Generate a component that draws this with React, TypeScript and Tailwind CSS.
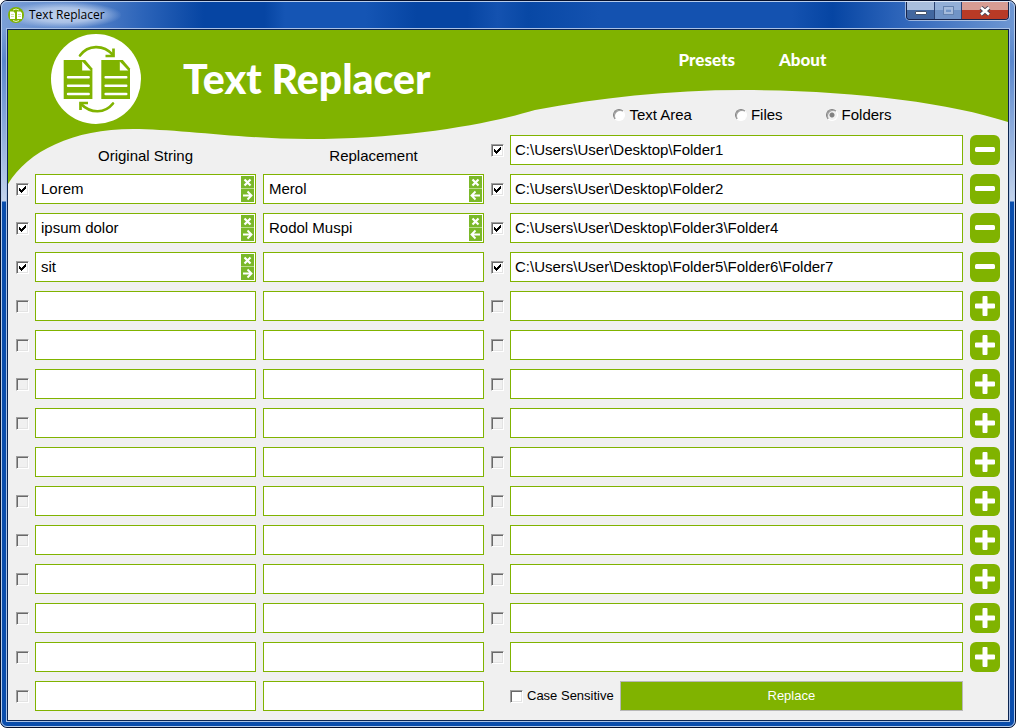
import { useState } from 'react'

type Kind = 'Text Area' | 'Files' | 'Folders'

interface Pair {
  original: string
  replacement: string
  active: boolean
}

interface Folder {
  path: string
  active: boolean
}

const initialPairs: Pair[] = Array.from({ length: 14 }, (_, i) => ({
  original: ['Lorem', 'ipsum dolor', 'sit'][i] ?? '',
  replacement: ['Merol', 'Rodol Muspi'][i] ?? '',
  active: i < 3,
}))

const initialFolders: Folder[] = Array.from({ length: 14 }, (_, i) => ({
  path:
    [
      'C:\\Users\\User\\Desktop\\Folder1',
      'C:\\Users\\User\\Desktop\\Folder2',
      'C:\\Users\\User\\Desktop\\Folder3\\Folder4',
      'C:\\Users\\User\\Desktop\\Folder5\\Folder6\\Folder7',
    ][i] ?? '',
  active: i < 4,
}))

function Logo({ className }: { className: string }) {
  return (
    <svg viewBox="0 0 90 90" className={className} aria-hidden="true">
      <circle cx="45" cy="45" r="45" fill="#fff" />
      <g fill="none" stroke="#80b300" strokeWidth="2.700">
        <path d="M29 21.500C37 11 52 10 62 21" strokeLinecap="round" />
        <path d="M62.500 14.500V22H54.500" />
        <path d="M62 69.500C54 79.500 40 80 30 70" strokeLinecap="round" />
        <path d="M29.500 76V69H37" />
      </g>
      {[12.7, 50.3].map((x) => (
        <g key={x} transform={`translate(${x} 26)`}>
          <path d="M0 0H21.500L28.700 8.500V39H0Z" fill="#80b300" />
          <path d="M18.500 1.500V10.500H27Z" fill="#fff" />
          <path
            d="M4.300 17.300H25M4.300 25.700H25M4.300 34H25"
            stroke="#fff"
            strokeWidth="2.400"
            strokeLinecap="round"
          />
        </g>
      ))}
    </svg>
  )
}

function Check({
  label,
  checked,
  disabled,
  onChange,
}: {
  label: string
  checked: boolean
  disabled?: boolean
  onChange: () => void
}) {
  return (
    <span className="relative block size-[13px] shrink-0">
      <input
        type="checkbox"
        aria-label={label}
        checked={checked}
        disabled={disabled}
        onChange={onChange}
        className="peer block size-[13px] appearance-none border border-t-[#a0a0a0] border-l-[#a0a0a0] border-r-white border-b-white bg-white shadow-[inset_1px_1px_0_#696969,inset_-1px_-1px_0_#e3e3e3] disabled:bg-[#f0f0f0]"
      />
      <svg
        viewBox="0 0 13 13"
        className="pointer-events-none absolute inset-0 hidden size-[13px] peer-checked:block"
        shapeRendering="crispEdges"
      >
        <path d="M3 5V8L5 10L10 5V2L5 7Z" fill="#000" />
      </svg>
    </span>
  )
}

function Field({
  label,
  value,
  arrow,
  onChange,
  onCopy,
}: {
  label: string
  value: string
  arrow: 'left' | 'right'
  onChange: (value: string) => void
  onCopy: () => void
}) {
  return (
    <div className="flex h-[30px] min-w-0 flex-1 items-center border border-[#80b300] bg-white pr-px">
      <input
        type="text"
        aria-label={label}
        value={value}
        onChange={(e) => onChange(e.target.value)}
        className="h-full min-w-0 flex-1 bg-transparent px-[5px] pb-0.5 text-[15px] outline-none"
      />
      {value !== '' && (
        <div className="flex flex-col">
          <button
            type="button"
            aria-label={`Clear ${label}`}
            onClick={() => onChange('')}
            className="size-[13px] border-b border-[#b9dc8a] bg-[#7ab829]"
          >
            <svg viewBox="0 0 13 12" className="block h-3 w-[13px]">
              <path d="M3.500 3.500L9.500 9.500M9.500 3.500L3.500 9.500" stroke="#fff" strokeWidth="2.200" />
            </svg>
          </button>
          <button
            type="button"
            aria-label={`Copy ${label}`}
            onClick={onCopy}
            className="size-[13px] bg-[#7ab829]"
          >
            <svg viewBox="0 0 13 13" className="block size-[13px]" fill="none" stroke="#fff" strokeWidth="1.900">
              {arrow === 'right' ? (
                <path d="M2 6.500H10.500M6.500 2.500L10.500 6.500L6.500 10.500" />
              ) : (
                <path d="M11 6.500H2.500M6.500 2.500L2.500 6.500L6.500 10.500" />
              )}
            </svg>
          </button>
        </div>
      )}
    </div>
  )
}

function TitleBar() {
  return (
    <div className="flex h-[26px] items-start justify-between">
      <div className="flex h-[26px] items-center gap-[5px] bg-[radial-gradient(ellipse_at_center,#c3d4ee_0%,#b4c9eae0_40%,transparent_72%)] pr-4 pl-[2px]">
        <svg viewBox="0 0 16 16" className="size-4" aria-hidden="true">
          <circle cx="8" cy="8" r="8" fill="#80b300" />
          <path d="M2 4.500H5.500L7 6V12H2ZM9 4.500H12.500L14 6V12H9Z" fill="#fff" />
          <path d="M5 3Q8 1 11 3M5 13.500Q8 15.500 11 13.500" stroke="#e6f0c8" fill="none" />
          <path d="M3 7.500H6M3 9.500H6M10 7.500H13M10 9.500H13" stroke="#c5de88" strokeWidth="0.800" />
        </svg>
        <span className="font-['Open_Sans','Noto_Sans',sans-serif] text-[12px] leading-4">Text Replacer</span>
      </div>
      <div className="mr-px flex h-[18px] overflow-hidden rounded-b-[4px] border border-t-0 border-[#16244a] shadow-[0_0_0_1px_#ffffff80]">
        <button
          type="button"
          aria-label="Minimize"
          className="flex w-[28px] items-center justify-center border-r border-[#2a4170] bg-linear-to-b from-[#a9bedd] from-45% to-[#42679f] to-50% pt-1"
        >
          <span className="block h-1 w-3 rounded-[1px] border border-[#46536b] bg-white" />
        </button>
        <button
          type="button"
          aria-label="Maximize"
          className="flex w-[27px] items-center justify-center border-r border-[#2a4170] bg-linear-to-b from-[#93afd7] from-45% to-[#7194c6] to-50%"
        >
          <span className="block h-[7px] w-[9px] border-2 border-[#a5bbdb] outline outline-[#6482ae]" />
        </button>
        <button
          type="button"
          aria-label="Close"
          className="flex w-[46px] items-center justify-center bg-linear-to-b from-[#d79c93] from-45% to-[#b83a26] to-50%"
        >
          <svg viewBox="0 0 12 10" className="h-[10px] w-3">
            <path d="M2 1.500L10 8.500M10 1.500L2 8.500" stroke="#4a4656" strokeWidth="4.400" />
            <path d="M2 1.500L10 8.500M10 1.500L2 8.500" stroke="#fff" strokeWidth="2.500" />
          </svg>
        </button>
      </div>
    </div>
  )
}

export default function App() {
  const [pairs, setPairs] = useState(initialPairs)
  const [folders, setFolders] = useState(initialFolders)
  const [kind, setKind] = useState<Kind>('Folders')
  const [caseSensitive, setCaseSensitive] = useState(false)

  const updatePair = (index: number, change: Partial<Pair>) => {
    setPairs((prev) => prev.map((p, i) => (i === index ? { ...p, ...change } : p)))
  }

  const updateFolder = (index: number, change: Partial<Folder>) => {
    setFolders((prev) => prev.map((f, i) => (i === index ? { ...f, ...change } : f)))
  }

  return (
    <div className="flex min-h-screen flex-col rounded-[7px] border border-[#05102c] bg-[linear-gradient(to_bottom,transparent_200px,#0a4dac_201px),linear-gradient(to_bottom,transparent_28px,#5a87cd_60px,#c3d3ec_200px),linear-gradient(to_right,#7b9fd6_0%,#5a86cb_8%,#2c64b9_14%,#0645a3_20%,#0645a3_26%,#1555b4_28%,#1555b4_36%,#0645a3_41%,#0645a3_46%,#1452b0_49%,#0848a5_52%,#1452b0_59%,#1452b0_78%,#0645a3_82%,#2a62b8_88%,#6f97d3_100%)] font-['Liberation_Sans',Arial,sans-serif] text-black">
      <div className="flex flex-1 flex-col rounded-[6px] border border-[#b8cdec] px-[4px] pb-[4px]">
        <TitleBar />
        <main className="flex flex-1 flex-col border border-[#a9c1e6]">
          <div className="relative isolate flex-1 border border-[#0b2450] bg-[#f0f0f0] px-2 pb-2">
            <svg
              viewBox="0 0 1000 155"
              preserveAspectRatio="none"
              className="absolute inset-x-0 top-0 -z-10 h-[155px] w-full"
              aria-hidden="true"
            >
              <path
                d="M0 0H1000V92C940 72 840 60 735 60C660 60 590 68 527 80C480 94 400 109 300 109C235 109 170 99 125 99C65 99 20 121 0 154Z"
                fill="#80b300"
              />
            </svg>

            <header className="grid h-[105px] grid-cols-[468fr_509fr] gap-[7px] text-white">
              <div className="flex min-w-0 items-center gap-[42px] pb-[7px] pl-[35px]">
                <Logo className="size-[90px] shrink-0" />
                <h1 className="font-['Lato',sans-serif] text-[41px] leading-[48px] font-black whitespace-nowrap">
                  Text Replacer
                </h1>
              </div>
              <div className="flex min-w-0 flex-col items-center pl-[14px]">
                <nav className="flex h-[60px] items-center gap-11 font-['Lato',sans-serif] text-[17px] font-black">
                  <a href="#presets">Presets</a>
                  <a href="#about">About</a>
                </nav>
                <div className="mt-4 flex h-[18px] gap-[43px] text-black">
                  {(['Text Area', 'Files', 'Folders'] as Kind[]).map((name) => (
                    <label key={name} className="flex items-center gap-1 text-[15px] leading-[18px]">
                      <input
                        type="radio"
                        name="kind"
                        checked={kind === name}
                        onChange={() => setKind(name)}
                        className="size-3 appearance-none rounded-full border border-t-[#808080] border-r-white border-b-white border-l-[#808080] bg-white shadow-[inset_1px_1px_0_#a0a0a0] checked:bg-[radial-gradient(circle,#808080_2px,#f0f0f0_3px)]"
                      />
                      {name}
                    </label>
                  ))}
                </div>
              </div>
            </header>

            <div className="grid grid-cols-[468fr_509fr] gap-[7px]">
              <section className="flex min-w-0 flex-col gap-[9px]">
                <div className="flex h-[30px] items-end gap-[7px] pl-[19px] text-center text-[15px] leading-[18px]">
                  <h2 className="flex-1">Original String</h2>
                  <h2 className="flex-1">Replacement</h2>
                </div>
                {pairs.map((pair, i) => (
                  <div key={i} className="flex items-center gap-[6px]">
                    <Check
                      label={`Use pair ${i + 1}`}
                      checked={pair.active}
                      disabled={pair.original === ''}
                      onChange={() => updatePair(i, { active: !pair.active })}
                    />
                    <div className="flex min-w-0 flex-1 gap-[7px]">
                      <Field
                        label={`Original string ${i + 1}`}
                        value={pair.original}
                        arrow="right"
                        onChange={(original) => updatePair(i, { original, active: original !== '' })}
                        onCopy={() => updatePair(i, { replacement: pair.original })}
                      />
                      <Field
                        label={`Replacement ${i + 1}`}
                        value={pair.replacement}
                        arrow="left"
                        onChange={(replacement) => updatePair(i, { replacement })}
                        onCopy={() => updatePair(i, { original: pair.replacement, active: true })}
                      />
                    </div>
                  </div>
                ))}
              </section>

              <section className="flex min-w-0 flex-col gap-[9px]">
                {folders.map((folder, i) => (
                  <div key={i} className="flex items-center gap-[6px]">
                    <Check
                      label={`Use folder ${i + 1}`}
                      checked={folder.active}
                      disabled={folder.path === ''}
                      onChange={() => updateFolder(i, { active: !folder.active })}
                    />
                    <div className="flex min-w-0 flex-1 gap-[7px]">
                      <input
                        type="text"
                        aria-label={`Folder ${i + 1}`}
                        value={folder.path}
                        onChange={(e) => updateFolder(i, { path: e.target.value, active: e.target.value !== '' })}
                        className="h-[30px] min-w-0 flex-1 border border-[#80b300] bg-white px-1 pb-0.5 text-[15px] outline-none"
                      />
                      <button
                        type="button"
                        aria-label={folder.path ? `Remove folder ${i + 1}` : `Add folder ${i + 1}`}
                        onClick={() => folder.path && updateFolder(i, { path: '', active: false })}
                        className="size-[30px] shrink-0 rounded-[6px] bg-[#80b300]"
                      >
                        <svg viewBox="0 0 30 30" className="block size-[30px]" fill="#fff">
                          {folder.path ? (
                            <rect x="5" y="12" width="20" height="5" rx="1.500" />
                          ) : (
                            <path d="M13.500 5H16.500Q17.500 5 17.500 6V12.500H24Q25 12.500 25 13.500V16.500Q25 17.500 24 17.500H17.500V24Q17.500 25 16.500 25H13.500Q12.500 25 12.500 24V17.500H6Q5 17.500 5 16.500V13.500Q5 12.500 6 12.500H12.500V6Q12.500 5 13.500 5Z" />
                          )}
                        </svg>
                      </button>
                    </div>
                  </div>
                ))}
                <div className="flex items-center gap-[6px] pr-[37px] pl-[19px] text-[13px]">
                  <label className="flex shrink-0 items-center gap-1">
                    <Check
                      label="Case Sensitive"
                      checked={caseSensitive}
                      onChange={() => setCaseSensitive(!caseSensitive)}
                    />
                    Case Sensitive
                  </label>
                  <button type="button" className="h-[30px] flex-1 border border-[#b8b8b8] bg-[#80b300] text-white">
                    Replace
                  </button>
                </div>
              </section>
            </div>
          </div>
        </main>
      </div>
    </div>
  )
}
